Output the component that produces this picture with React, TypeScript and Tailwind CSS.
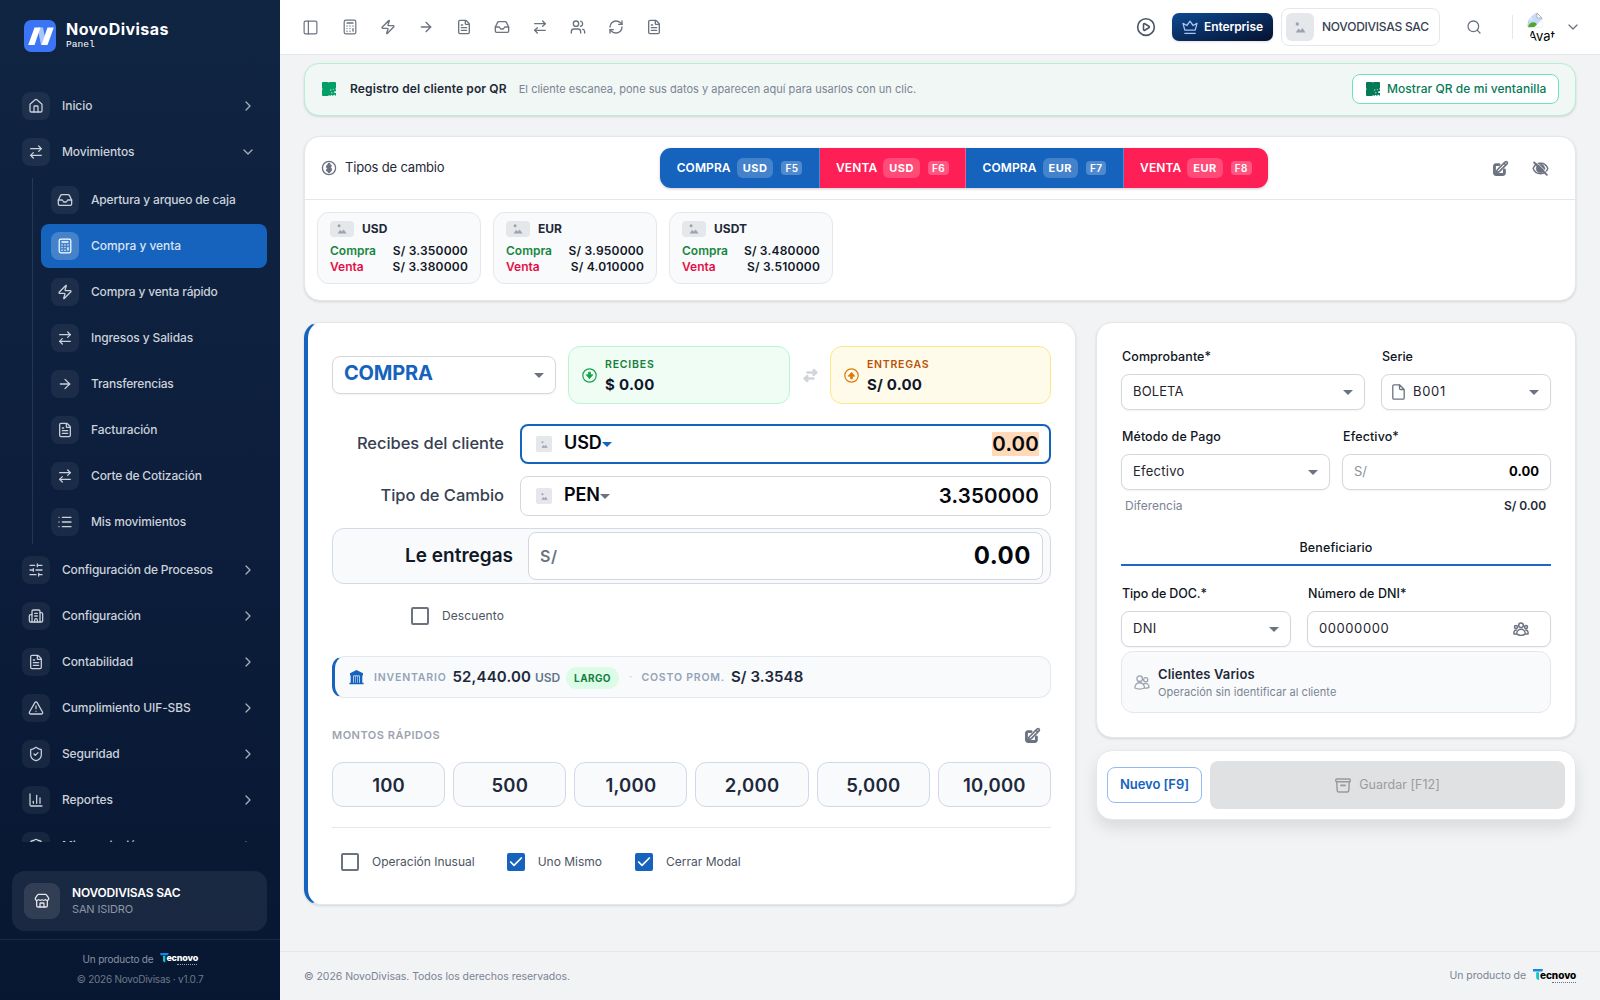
import React from 'react';
import {
  House, ArrowRightLeft, Inbox, Zap, ArrowRight, FileText, List, SlidersHorizontal, Building2,
  TriangleAlert, ShieldCheck, ChartColumn, ChevronRight, ChevronDown, Store, PanelLeft, Users, RefreshCw,
  CirclePlay, Search, BadgeCheck, Check,
} from 'lucide-react';

type IconType = React.ComponentType<{ size?: number; strokeWidth?: number; className?: string }>;

/* ---------- drawings ---------- */

const Calculator = ({ size = 16 }: { size?: number; strokeWidth?: number }) => (
  <svg width={size} height={size} viewBox="0 0 16 16" fill="none" stroke="currentColor" strokeWidth="1.2" strokeLinecap="round">
    <rect x="2.200" y="1.200" width="11.600" height="13.600" rx="1.500" />
    <path d="M5 4h6" strokeWidth="1.300" />
    <path d="M5 7h.01M8 7h.01M11 7h.01M5 9.600h.01M8 9.600h.01M5 12.200h.01M8 12.200h.01M11 9.800v2.300" strokeWidth="1.400" />
  </svg>
);

const Caret = ({ className = 'text-[#6b7280]' }: { className?: string }) => (
  <svg width="10" height="5" viewBox="0 0 10 5" fill="currentColor" className={`shrink-0 ${className}`}>
    <path d="M0 0h10L5 5z" />
  </svg>
);

const PictureGlyph = ({ size }: { size: number }) => (
  <svg width={size} height={size} viewBox="0 0 12 12" fill="#9ca3af">
    <circle cx="2.5" cy="2.2" r="1.8" />
    <path d="M.8 11.4 3.8 7l2 2.3L8 6.6l3.5 4.8z" />
  </svg>
);

const QrIcon = ({ className }: { className: string }) => (
  <svg width="14" height="14" viewBox="0 0 14 14" fill="currentColor" className={`shrink-0 ${className}`}>
    <path d="M1 0h5.200l.6.700.8-.700H13a1 1 0 0 1 1 1v5l-.8.900.8.700v1.600h-1.700v1.700H14V13a1 1 0 0 1-.5.800L12 12.400l-1 1.600-1.500-1.300L8.200 14 7 12.900 6.200 14H1a1 1 0 0 1-1-1V8l.7-.9L0 6.300V1a1 1 0 0 1 1-1Z" />
    <path d="M8.200 7.600h1v1h-1zM10.800 7.200h.9v.9h-.9zM9.300 10.200h1v1h-1z" fill="#fff" />
  </svg>
);

const DollarIcon = () => (
  <svg width="16" height="16" viewBox="0 0 24 24" fill="none" stroke="#6b7280" className="shrink-0">
    <circle cx="12" cy="12" r="9.900" strokeWidth="2" />
    <path strokeWidth="4" strokeLinecap="round" strokeLinejoin="round" d="M12 6v12m-2.600-2.800.9.600c1 .8 2.600.8 3.500 0 1-.9 1-2.200 0-3-.5-.5-1.100-.8-1.800-.8s-1.300-.3-1.800-.7c-1-.9-1-2 0-2.800s2.600-.8 3.500 0l.4.300" />
  </svg>
);

const EditIcon = () => (
  <svg width="17" height="17" viewBox="0 0 24 24" fill="none" stroke="#6b7280" strokeLinecap="round" strokeLinejoin="round">
    <path strokeWidth="4" d="M17.500 14v4.750A2 2 0 0 1 15.500 20.500H5.500A2 2 0 0 1 3.500 18.750V8.500A2 2 0 0 1 5.500 6.500H10" />
    <path strokeWidth="2.300" fill="#fff" d="m16.862 4.487 1.687-1.688a1.875 1.875 0 1 1 2.652 2.652L10.582 16.070a4.500 4.500 0 0 1-1.897 1.130L6 18l.8-2.685a4.500 4.500 0 0 1 1.130-1.897l8.932-8.931ZM16.862 4.487 19.500 7.125" />
  </svg>
);

const EyeOffIcon = () => (
  <svg width="17" height="17" viewBox="0 0 24 24" fill="none" stroke="#6b7280" strokeLinecap="round" strokeLinejoin="round">
    <path strokeWidth="2" d="M1.600 12C3.200 7.500 7.200 4.600 12 4.600S20.800 7.500 22.400 12c-1.600 4.500-5.600 7.400-10.400 7.400S3.200 16.500 1.600 12Z" />
    <circle cx="12" cy="12" r="6" fill="#6b7280" strokeWidth="1" />
    <path strokeWidth="2.600" d="m3 3.500 18 17.500" />
    <path stroke="#fff" strokeWidth="1" d="m6.500 3.500 15 14.500" />
  </svg>
);

const ArrowBadge = ({ up, className }: { up?: boolean; className: string }) => (
  <svg width="15" height="15" viewBox="0 0 15 15" fill="none" stroke="currentColor" className={`shrink-0 ${className} ${up ? 'rotate-180' : ''}`}>
    <circle cx="7.500" cy="7.500" r="6.700" strokeWidth="1.200" />
    <path d="M6.500 4.200h2v2.600h2.300L7.500 10.700 4.200 6.800h2.300z" fill="currentColor" strokeWidth=".8" strokeLinejoin="round" />
  </svg>
);

const SwapIcon = () => (
  <svg width="15" height="15" viewBox="0 0 15 15" fill="none" stroke="#d1d5db" strokeWidth="2.500" strokeLinecap="round" strokeLinejoin="round">
    <path d="M4.500 4.500h8.500M10.700 2l2.600 2.500-2.600 2.400M10.500 10.500H2M4.300 8.100l-2.600 2.400L4.300 13" />
  </svg>
);

const BankIcon = () => (
  <svg width="15" height="15" viewBox="0 0 15 15" fill="#1663be" className="shrink-0">
    <path d="M7.500 0 14 3.300v2.300H1V3.300zM1.700 5h2.600v8H1.700zM10.700 5h2.600v8h-2.600zM5 6.200h1.400V13H5zM6.900 6.200h1.300V13H6.900zM8.700 6.200H10V13H8.700zM.4 12.800h14.200v1.500H.4z" />
  </svg>
);

const GroupIcon = () => (
  <svg width="16" height="14" viewBox="0 0 16 14" fill="none" stroke="#6b7280" strokeWidth="1.500">
    <circle cx="8" cy="3.200" r="2.300" />
    <circle cx="3" cy="5" r="1.500" />
    <circle cx="13" cy="5" r="1.500" />
    <path d="M3.700 12.200c0-6.500 8.600-6.500 8.600 0-2.500 1.400-6.100 1.400-8.600 0ZM3.500 12H1.100c-.7-2.200.6-4.300 2.700-3.800M12.500 12h2.400c.7-2.200-.6-4.300-2.700-3.800" />
  </svg>
);

const PairIcon = () => (
  <svg width="16" height="15" viewBox="0 0 16 15" fill="none" stroke="#9ca3af" strokeWidth="1.300" className="shrink-0">
    <circle cx="5.700" cy="3.700" r="2.800" />
    <circle cx="11.700" cy="4.800" r="2.100" />
    <path d="M.9 13c0-7 9.600-7 9.600 0-2.500 1.300-7 1.300-9.600 0ZM9.700 8.900c2.800-1.300 5.500.5 5.300 3.500-1.300.7-3 .9-4.300.7" />
  </svg>
);

const ArchiveIcon = () => (
  <svg width="16" height="15" viewBox="0 0 16 15" fill="none" stroke="#97999c" strokeWidth="1.400" strokeLinejoin="round" className="shrink-0">
    <rect x=".8" y="1" width="14.400" height="2.800" rx=".8" />
    <path d="m1.700 4 .5 8.600c.1.900.7 1.400 1.500 1.400h8.600c.8 0 1.400-.5 1.500-1.400l.5-8.600" />
    <path d="M6 7.400h4" strokeWidth="1.900" strokeLinecap="round" />
  </svg>
);

const PageIcon = () => (
  <svg width="13" height="16" viewBox="0 0 13 16" fill="none" stroke="#6b7280" strokeWidth="1.300" strokeLinejoin="round" className="shrink-0">
    <path d="M7.500.8H2A1.200 1.200 0 0 0 .8 2v12A1.200 1.200 0 0 0 2 15.200h9a1.200 1.200 0 0 0 1.200-1.200V5.500L7.500.8v3.500c0 .7.5 1.200 1.200 1.200h3.500" />
  </svg>
);

const CrownIcon = () => (
  <svg width="16" height="15" viewBox="0 0 16 15" fill="none" stroke="#a9c4f5" strokeWidth="1.300" strokeLinecap="round" strokeLinejoin="round" className="shrink-0">
    <path d="M2.800 10.200 1 3.300l3.900 2.200L8 1.200l3.100 4.300L15 3.300l-1.800 6.900zM2.800 13.300h10.400" />
  </svg>
);

const BrokenImage = () => (
  <svg width="16" height="16" viewBox="0 0 16 16">
    <path d="M1 1h9l5 5v9H1z" fill="#c6dafb" stroke="#b5b9bf" strokeWidth=".8" />
    <path d="M10 1v5h5z" fill="#fff" stroke="#a3a7ad" strokeWidth=".8" />
    <path d="M3 7.500c.4-1.500 2.500-1.500 3 0z" fill="#fff" />
    <path d="M1 15c1.200-4 4.500-6 8-4l2 4z" fill="#4ea72e" />
    <path d="M9 15.500 15.500 9v6.500z" fill="#fff" />
    <path d="M7.500 16 16 7.500" stroke="#fff" strokeWidth="1.600" />
  </svg>
);

const Tecnovo = ({ dark }: { dark?: boolean }) => (
  <div className={`relative flex items-end leading-none ${dark ? 'h-[14px] w-[43px]' : 'h-[12px] w-[37px]'}`}>
    <svg viewBox="0 0 10 12" className={`absolute left-0 top-0 ${dark ? 'h-[12px] w-[10px]' : 'h-[10px] w-[9px]'}`}>
      <path d="M0 0h10l-.6 2.600H0z" fill="#1486e8" />
      <path d="M3.200 3.200h2.800V11c-1.600 0-2.800-.8-2.800-2.400z" fill="#14c4c8" />
    </svg>
    <span className={`absolute font-extrabold ${dark ? 'left-[7px] top-[1px] text-[10px] tracking-[-0.05px] text-black' : 'left-[6px] top-0 text-[9px] tracking-[-0.2px] text-white'}`}>ecnovo</span>
    <span className={`absolute bottom-0 right-0 border-t border-dotted ${dark ? 'w-[24px] border-gray-500' : 'w-[20px] border-gray-400'}`} />
  </div>
);

/* ---------- sidebar ---------- */

const NavItem = ({ icon: Icon, label, className = '', chevron, active }: { icon: IconType; label: string; className?: string; chevron?: 'right' | 'down'; active?: boolean }) => (
  <div className={`flex h-[44px] shrink-0 items-center rounded-[8px] pl-[10px] pr-[11px] ${active ? 'bg-[#1663be] text-[#dbe4f2]' : 'text-[#cbd1da]'}`}>
    <div className={`flex h-7 w-7 shrink-0 items-center justify-center rounded-[8px] ${active ? 'bg-white/20 text-white' : 'bg-white/[0.06]'}`}>
      <Icon size={16} strokeWidth={1.900} />
    </div>
    <span className={`ml-3 flex-1 whitespace-nowrap text-[12px] font-medium ${className}`}>{label}</span>
    {chevron === 'right' && <ChevronRight size={16} strokeWidth={1.900} className="text-[#a8b0be]" />}
    {chevron === 'down' && <ChevronDown size={16} strokeWidth={1.900} className="text-[#a8b0be]" />}
  </div>
);

const SUB: { icon: IconType; label: string; active?: boolean; cls: string }[] = [
  { icon: Inbox, label: 'Apertura y arqueo de caja', cls: 'tracking-[-0.16px]' },
  { icon: Calculator, label: 'Compra y venta', active: true, cls: 'tracking-[-0.05px]' },
  { icon: Zap, label: 'Compra y venta rápido', cls: 'tracking-[-0.18px]' },
  { icon: ArrowRightLeft, label: 'Ingresos y Salidas', cls: 'tracking-[-0.12px]' },
  { icon: ArrowRight, label: 'Transferencias', cls: 'tracking-[-0.2px]' },
  { icon: FileText, label: 'Facturación', cls: 'tracking-[-0.12px]' },
  { icon: ArrowRightLeft, label: 'Corte de Cotización', cls: 'tracking-[-0.16px]' },
  { icon: List, label: 'Mis movimientos', cls: 'tracking-[-0.12px]' },
];

const MAIN: { icon: IconType; label: string; cls: string }[] = [
  { icon: SlidersHorizontal, label: 'Configuración de Procesos', cls: 'tracking-[-0.2px]' },
  { icon: Building2, label: 'Configuración', cls: 'tracking-[-0.2px]' },
  { icon: FileText, label: 'Contabilidad', cls: 'tracking-[-0.1px]' },
  { icon: TriangleAlert, label: 'Cumplimiento UIF-SBS', cls: 'tracking-[-0.1px]' },
  { icon: ShieldCheck, label: 'Seguridad', cls: 'tracking-[-0.15px]' },
  { icon: ChartColumn, label: 'Reportes', cls: 'tracking-[-0.1px]' },
  { icon: BadgeCheck, label: 'Mi suscripción', cls: 'tracking-[-0.2px]' },
];

const Sidebar = () => (
  <aside className="flex h-[1000px] w-[280px] shrink-0 flex-col bg-linear-to-b from-[#102542] via-[#0c1e3c] to-[#081731]">
    <div className="flex h-[84px] shrink-0 items-start pl-6 pt-5">
      <svg width="32" height="32" viewBox="0 0 32 32">
        <rect width="32" height="32" rx="7" fill="#3b75f6" />
        <path d="M13.500 7.500h5.500l3.500 17.500h-5.500z" fill="#a9c6fb" />
        <path d="M10.500 7.500h6L10.500 25H4.200zM23.500 7.500h6.300L23.500 25h-6z" fill="#fff" />
      </svg>
      <div className="ml-[10px] text-white">
        <div className="text-[16px] font-bold leading-[19px] tracking-[0.450px]">NovoDivisas</div>
        <div className="font-['Liberation_Mono',monospace] text-[9.600px] font-medium leading-[11px]">Panel</div>
      </div>
    </div>
    <nav className="flex h-[758px] shrink-0 flex-col gap-[2px] overflow-hidden pl-3 pr-[13px]">
      <NavItem icon={House} label="Inicio" chevron="right" className="tracking-[-0.05px]" />
      <NavItem icon={ArrowRightLeft} label="Movimientos" chevron="down" className="tracking-[-0.1px]" />
      <div className="ml-5 mt-[2px] mb-[2px] flex shrink-0 flex-col gap-[2px] border-l border-white/10 pl-2">
        {SUB.map((s) => (
          <NavItem key={s.label} icon={s.icon} label={s.label} active={s.active} className={s.cls} />
        ))}
      </div>
      {MAIN.map((m) => (
        <NavItem key={m.label} icon={m.icon} label={m.label} chevron="right" className={m.cls} />
      ))}
    </nav>
    <div className="ml-3 mr-[13px] mt-[29px] flex h-[60px] shrink-0 items-center rounded-[13px] bg-white/[0.07] pl-3">
      <div className="flex h-9 w-9 items-center justify-center rounded-[9px] bg-white/10 text-gray-200">
        <Store size={16} strokeWidth={1.900} />
      </div>
      <div className="ml-3">
        <div className="text-[12px] font-semibold leading-4 tracking-[-0.200px] text-white">NOVODIVISAS SAC</div>
        <div className="text-[11px] leading-4 tracking-[-0.150px] text-[#8d96a6]">SAN ISIDRO</div>
      </div>
    </div>
    <div className="mt-2 flex flex-1 flex-col items-center border-t border-white/[0.07] pt-[11px]">
      <div className="flex h-4 items-center gap-[7px] text-[10px] tracking-[-0.200px] text-[#8a93a3]">
        Un producto de <Tecnovo />
      </div>
      <div className="mt-1 text-[10px] leading-4 tracking-[-0.250px] text-[#6d7789]">© 2026 NovoDivisas · v1.0.7</div>
    </div>
  </aside>
);

/* ---------- top bar ---------- */

const TOOLS: IconType[] = [Calculator, Zap, ArrowRight, FileText, Inbox, ArrowRightLeft, Users, RefreshCw, FileText];

const TopBar = () => (
  <header className="flex h-[55px] shrink-0 items-center border-b border-[#e5e7eb] bg-white pl-[10px] pr-[19px] text-[#6b7280]">
    <div className="mr-px flex w-10 justify-center"><PanelLeft size={17} strokeWidth={1.700} /></div>
    {TOOLS.map((T, i) => (
      <div key={i} className="flex w-[38px] justify-center"><T size={16} strokeWidth={2} /></div>
    ))}
    <CirclePlay size={20} strokeWidth={1.900} className="ml-auto text-[#4b5563]" />
    <div className="ml-4 flex h-7 w-[101px] items-center rounded-[7px] bg-linear-to-br from-[#0c4a93] to-[#051230] pl-[10px] shadow-sm">
      <CrownIcon />
      <span className="ml-[6px] text-[12px] font-semibold tracking-[-0.100px] text-white">Enterprise</span>
    </div>
    <div className="ml-2 flex h-[38px] w-[159px] items-center rounded-[8px] border border-[#e5e7eb] pl-1">
      <div className="flex h-7 w-7 items-center justify-center rounded-[6px] bg-[#e5e7eb]"><PictureGlyph size={11} /></div>
      <span className="ml-2 whitespace-nowrap text-[12px] font-medium tracking-[-0.250px] text-[#374151]">NOVODIVISAS SAC</span>
    </div>
    <Search size={16} strokeWidth={1.900} className="ml-[26px]" />
    <div className="ml-[30px] h-6 w-px bg-[#e5e7eb]" />
    <div className="ml-[14px] h-[30px] w-[30px] overflow-hidden rounded-full">
      <BrokenImage />
      <div className="whitespace-nowrap pl-px text-[13px] leading-[17px] text-black">Avatar</div>
    </div>
    <ChevronDown size={16} strokeWidth={1.900} className="ml-[8px]" />
  </header>
);

/* ---------- content ---------- */

const Banner = () => (
  <div className="flex h-[53px] shrink-0 items-center rounded-[15px] border border-[#b4f0d1] bg-[#f0f7f5] pb-px pl-[17px] pr-4 shadow-sm">
    <QrIcon className="text-[#059e69]" />
    <span className="ml-[14px] text-[12px] font-semibold tracking-[0.120px] text-[#1f2937]">Registro del cliente por QR</span>
    <span className="ml-3 text-[11px] tracking-[0.020px] text-[#7b8492]">El cliente escanea, pone sus datos y aparecen aquí para usarlos con un clic.</span>
    <div className="ml-auto flex h-[30px] w-[207px] items-center rounded-[8px] border border-[#70e2b6] bg-white pl-[13px] text-[#067a57]">
      <QrIcon className="text-[#067a57]" />
      <span className="ml-[7px] whitespace-nowrap text-[12px] font-medium tracking-[0.060px]">Mostrar QR de mi ventanilla</span>
    </div>
  </div>
);

const SEGMENTS = [
  { side: 'COMPRA', cur: 'USD', key: 'F5', box: 'w-[160px] bg-[#1663be] border-r border-white/25' },
  { side: 'VENTA', cur: 'USD', key: 'F6', box: 'w-[146px] bg-[#ff1f57] border-r border-white/25' },
  { side: 'COMPRA', cur: 'EUR', key: 'F7', box: 'w-[158px] bg-[#1663be] border-r border-white/25' },
  { side: 'VENTA', cur: 'EUR', key: 'F8', box: 'w-[144px] bg-[#ff1f57]' },
];

const RATES = [
  { cur: 'USD', buy: 'S/ 3.350000', sell: 'S/ 3.380000' },
  { cur: 'EUR', buy: 'S/ 3.950000', sell: 'S/ 4.010000' },
  { cur: 'USDT', buy: 'S/ 3.480000', sell: 'S/ 3.510000' },
];

const Rates = () => (
  <section className="mt-[20px] h-[165px] shrink-0 rounded-[16px] border border-[#e5e7eb] bg-white shadow-sm">
    <div className="flex h-[63px] items-center border-b border-[#e5e7eb] px-4">
      <div className="flex w-[339px] items-center">
        <DollarIcon />
        <span className="ml-2 text-[13px] tracking-[-0.180px] text-[#1f2937]">Tipos de cambio</span>
      </div>
      <div className="flex h-10 overflow-hidden rounded-[11px] text-white shadow-[0_1px_3px_rgba(0,0,0,0.2)]">
        {SEGMENTS.map((s) => (
          <div key={s.key} className={`flex items-center justify-center whitespace-nowrap ${s.box}`}>
            <span className="text-[12px] font-semibold tracking-[0.100px]">{s.side}</span>
            <span className="ml-[6px] rounded-[6px] bg-white/20 px-[6px] text-[11px] font-bold leading-5 tracking-[0.500px]">{s.cur}</span>
            <span className="ml-2 rounded-[4px] bg-white/25 px-1 text-[10px] font-semibold leading-[14px] tracking-[0.400px]">{s.key}</span>
          </div>
        ))}
      </div>
      <div className="ml-auto flex items-center gap-[23px] pr-[10px]"><EditIcon /><EyeOffIcon /></div>
    </div>
    <div className="flex gap-3 px-3 pt-[12px]">
      {RATES.map((r) => (
        <div key={r.cur} className="h-[72px] w-[164px] rounded-[12px] border border-[#e5e7eb] bg-[#f9fafc] px-3 pt-2 text-[12px] font-semibold">
          <div className="flex h-4 items-center">
            <div className="flex h-4 w-6 items-center justify-center rounded-[4px] bg-[#e5e7eb]"><PictureGlyph size={10} /></div>
            <span className="ml-2 font-bold text-[#1f2937]">{r.cur}</span>
          </div>
          <div className="mt-[6px] flex h-4 items-center justify-between">
            <span className="text-[#15883e]">Compra</span><span className="tracking-[0.200px] text-[#111827]">{r.buy}</span>
          </div>
          <div className="flex h-4 items-center justify-between">
            <span className="text-[#e60f45]">Venta</span><span className="tracking-[0.200px] text-[#111827]">{r.sell}</span>
          </div>
        </div>
      ))}
    </div>
  </section>
);

const AmountRow = ({ label, cur, value, focused }: { label: string; cur: string; value: string; focused?: boolean }) => (
  <div className="flex h-10 items-center">
    <div className="w-[172px] pb-[2px] text-right text-[16.500px] font-medium tracking-[-0.050px] text-[#374151]">{label}</div>
    <div className={`ml-4 flex h-10 flex-1 items-center rounded-[8px] bg-white ${focused ? 'border-2 border-[#1663be] pl-[14px] pr-[10px]' : 'border border-[#d5d7dd] pl-[15px] pr-[11px]'}`}>
      <div className="flex h-4 w-4 items-center justify-center rounded-[2px] bg-[#e5e7eb]"><PictureGlyph size={7} /></div>
      <span className="-mt-[2px] ml-3 text-[18px] font-semibold leading-6 tracking-[-0.100px] text-[#05070f]">{cur}</span>
      <Caret className={focused ? 'text-[#1663be]' : 'text-[#6b7280]'} />
      <span className={`ml-auto text-[20.500px] font-semibold leading-6 tracking-[0.200px] text-[#05070f] ${focused ? '-mt-px bg-[#ffd9b8]' : ''}`}>{value}</span>
    </div>
  </div>
);

const CheckItem = ({ label, checked, cls = '' }: { label: string; checked?: boolean; cls?: string }) => (
  <div className={`flex items-center ${cls}`}>
    {checked ? (
      <div className="flex h-[18px] w-[18px] items-center justify-center rounded-[2px] bg-[#1663be]"><Check size={16} strokeWidth={2.600} className="text-white" /></div>
    ) : (
      <div className="h-[18px] w-[18px] rounded-[2px] border-2 border-[#6b7280]" />
    )}
    <span className="ml-[13px] whitespace-nowrap text-[12px] text-[#4b5563]">{label}</span>
  </div>
);

const QUICK = ['100', '500', '1,000', '2,000', '5,000', '10,000'];

const Operation = () => (
  <section className="h-[583px] w-[772px] shrink-0 rounded-[16px] border border-l-4 border-[#e5e7eb] border-l-[#1663be] bg-white px-6 pt-[23px] shadow-sm">
    <div className="flex h-[58px] items-center">
      <div className="flex h-[38px] w-[224px] items-center rounded-[8px] border border-[#d5d7dd] pl-[11px] pr-[11px] shadow-xs">
        <span className="-mt-1 flex-1 text-[20px] font-bold tracking-[-0.200px] text-[#1663be]">COMPRA</span>
        <Caret />
      </div>
      <div className="ml-3 flex h-[58px] w-[222px] items-center rounded-[12px] border border-[#bff3cf] bg-[#f0fdf5] pl-[13px]">
        <ArrowBadge className="text-[#16a34a]" />
        <div className="ml-[8px] pt-[2px]">
          <div className="text-[10.500px] font-semibold leading-[17px] tracking-[0.800px] text-[#15803d]">RECIBES</div>
          <div className="text-[15px] font-bold leading-[23px] tracking-[0.300px] text-[#0f172a]">$ 0.00</div>
        </div>
      </div>
      <div className="flex w-10 justify-center"><SwapIcon /></div>
      <div className="flex h-[58px] flex-1 items-center rounded-[12px] border border-[#fde68a] bg-[#fffbeb] pl-[13px]">
        <ArrowBadge up className="text-[#e07a0b]" />
        <div className="ml-[8px] pt-[2px]">
          <div className="text-[10.500px] font-semibold leading-[17px] tracking-[0.750px] text-[#b95309]">ENTREGAS</div>
          <div className="text-[15px] font-bold leading-[23px] tracking-[0.200px] text-[#0f172a]">S/ 0.00</div>
        </div>
      </div>
    </div>
    <div className="mt-5 flex flex-col gap-3">
      <AmountRow label="Recibes del cliente" cur="USD" value="0.00" focused />
      <AmountRow label="Tipo de Cambio" cur="PEN" value="3.350000" />
      <div className="flex h-14 items-center rounded-[12px] border border-[#d2dae6] bg-[#f8fafc] pr-[7px]">
        <div className="w-[180px] pt-px text-right text-[19px] font-semibold text-[#111827]">Le entregas</div>
        <div className="ml-[15px] flex h-12 flex-1 items-center rounded-[8px] border border-[#d5d7dd] bg-white px-[11px]">
          <span className="text-[16px] font-semibold tracking-[0.500px] text-[#6b7280]">S/</span>
          <span className="ml-auto text-[24px] font-bold tracking-[0.500px] text-[#05070f]">0.00</span>
        </div>
      </div>
    </div>
    <CheckItem label="Descuento" cls="ml-[79px] mt-[23px] h-[18px] tracking-[0.100px]" />
    <div className="mt-[31px] flex h-[42px] items-center rounded-[12px] border border-l-3 border-[#e2e8f0] border-l-[#1663be] bg-[#f8fafc] pl-[14px] font-semibold">
      <BankIcon />
      <span className="ml-[10px] mt-[2px] text-[10.500px] tracking-[0.820px] text-[#94a3b8]">INVENTARIO</span>
      <span className="ml-[6px] text-[15px] tracking-[0.150px] text-[#1e293b]">52,440.00</span>
      <span className="ml-1 mt-px text-[12px] tracking-[-0.100px] text-[#64748b]">USD</span>
      <span className="ml-[6px] mt-[2px] rounded-full bg-[#dcfce7] px-[8px] text-[10px] font-bold leading-[22px] tracking-[0.400px] text-[#15803d]">LARGO</span>
      <span className="ml-[10px] text-[12px] font-normal text-[#cbd5e1]">·</span>
      <span className="ml-[9px] mt-[2px] text-[10.500px] tracking-[0.800px] text-[#94a3b8]">COSTO PROM.</span>
      <span className="ml-[6px] text-[15px] tracking-[0.120px] text-[#1e293b]">S/ 3.3548</span>
    </div>
    <div className="mt-[27px] flex h-5 items-center justify-between pr-[10px]">
      <span className="pt-px text-[11px] font-semibold tracking-[0.500px] text-[#9ca3af]">MONTOS RÁPIDOS</span>
      <EditIcon />
    </div>
    <div className="mt-[17px] grid grid-cols-6 gap-2">
      {QUICK.map((q) => (
        <div key={q} className="flex h-[45px] items-center justify-center rounded-[11px] border border-[#d0d9e6] bg-[#f8fafc] pt-[2px] text-[18.500px] font-semibold tracking-[0.200px] text-[#1e293b]">{q}</div>
      ))}
    </div>
    <div className="mt-5 flex h-[68px] items-center border-t border-[#e5e7eb] pl-[9px]">
      <CheckItem label="Operación Inusual" />
      <CheckItem label="Uno Mismo" checked cls="ml-[32px]" />
      <CheckItem label="Cerrar Modal" checked cls="ml-[33px]" />
    </div>
  </section>
);

const Label = ({ children, cls = '' }: { children: React.ReactNode; cls?: string }) => (
  <div className={`ml-px flex h-[34px] items-center whitespace-nowrap text-[12.500px] font-medium text-[#0f1523] ${cls}`}>{children}</div>
);

const Field = ({ children, cls = '' }: { children: React.ReactNode; cls?: string }) => (
  <div className={`flex h-9 items-center rounded-[8px] border border-[#d5d7dd] bg-white pl-[11px] pr-[11px] text-[13px] text-[#1f2430] shadow-xs ${cls}`}>{children}</div>
);

const Voucher = () => (
  <section className="h-[416px] rounded-[16px] border border-[#e5e7eb] bg-white px-6 pt-[17px] shadow-sm">
    <div className="flex gap-4">
      <div className="w-[244px]">
        <Label cls="tracking-[0.080px]">Comprobante*</Label>
        <Field><span className="flex-1 tracking-[0.120px]">BOLETA</span><Caret /></Field>
      </div>
      <div className="w-[170px]">
        <Label cls="tracking-[0px]">Serie</Label>
        <Field cls="!pl-[10px]"><PageIcon /><span className="ml-2 flex-1 tracking-[0.700px]">B001</span><Caret /></Field>
      </div>
    </div>
    <div className="mt-[10px] flex gap-3">
      <div className="w-[209px]">
        <Label cls="tracking-[0.080px]">Método de Pago</Label>
        <Field><span className="flex-1 tracking-[0.260px]">Efectivo</span><Caret /></Field>
      </div>
      <div className="w-[209px]">
        <Label cls="tracking-[0.120px]">Efectivo*</Label>
        <Field><span className="text-[#8a92a0]">S/</span><span className="ml-auto text-[13px] font-bold text-black">0.00</span></Field>
      </div>
    </div>
    <div className="mt-[8px] flex h-4 items-center justify-between pl-1 pr-[5px] text-[12px]">
      <span className="text-[#7b8494]">Diferencia</span>
      <span className="font-semibold tracking-[-0.050px] text-[#1f2937]">S/ 0.00</span>
    </div>
    <div className="mt-[18px] flex h-[34px] items-center justify-center border-b-2 border-[#1b69c4] text-[12.500px] font-medium tracking-[0.120px] text-[#0f1523]">Beneficiario</div>
    <div className="mt-[11px] flex gap-4">
      <div className="w-[170px]">
        <Label cls="tracking-[-0.120px]">Tipo de DOC.*</Label>
        <Field><span className="flex-1 tracking-[0.300px]">DNI</span><Caret /></Field>
      </div>
      <div className="w-[244px]">
        <Label cls="tracking-[0.060px]">Número de DNI*</Label>
        <Field cls="!pr-[21px]"><span className="flex-1 tracking-[0.580px]">00000000</span><GroupIcon /></Field>
      </div>
    </div>
    <div className="mt-1 flex h-[62px] items-center rounded-[12px] border border-[#e5e7eb] bg-[#f9fafc] pl-[12px]">
      <PairIcon />
      <div className="ml-2 pt-[3px]">
        <div className="text-[13px] font-semibold leading-[17px] tracking-[0.150px] text-[#1f2937]">Clientes Varios</div>
        <div className="text-[11px] leading-[18px] tracking-[0.050px] text-[#7b8494]">Operación sin identificar al cliente</div>
      </div>
    </div>
  </section>
);

const Actions = () => (
  <div className="mt-[12px] flex h-[70px] items-center rounded-[16px] border border-[#e5e7eb] bg-white px-[10px] shadow-[0_8px_16px_rgba(0,0,0,0.1)]">
    <div className="flex h-9 w-[95px] items-center justify-center whitespace-nowrap rounded-[8px] border border-[#93b8fb] text-[13px] font-semibold tracking-[-0.070px] text-[#1663be]">Nuevo [F9]</div>
    <div className="ml-2 flex h-12 flex-1 items-center justify-center rounded-[8px] bg-[#e0e1e2] text-[12.500px] tracking-[0.020px] text-[#9a9c9f]">
      <ArchiveIcon />
      <span className="ml-2">Guardar [F12]</span>
    </div>
  </div>
);

export default function App() {
  return (
    <div className="flex h-[1000px] w-[1600px] overflow-hidden bg-[#f2f3f5] font-['Inter',sans-serif]">
      <Sidebar />
      <div className="flex min-w-0 flex-1 flex-col">
        <TopBar />
        <main className="flex h-[896px] flex-col px-6 pt-2">
          <Banner />
          <Rates />
          <div className="mt-[21px] flex gap-5">
            <Operation />
            <div className="flex-1">
              <Voucher />
              <Actions />
            </div>
          </div>
        </main>
        <footer className="flex flex-1 items-center justify-between border-t border-[#e5e7eb] px-6 text-[#7b8494]">
          <span className="pt-px text-[10.500px] tracking-[-0.040px]">© 2026 NovoDivisas. Todos los derechos reservados.</span>
          <span className="flex items-center gap-[7px] text-[10.500px] tracking-[-0.050px]">Un producto de <Tecnovo dark /></span>
        </footer>
      </div>
    </div>
  );
}
